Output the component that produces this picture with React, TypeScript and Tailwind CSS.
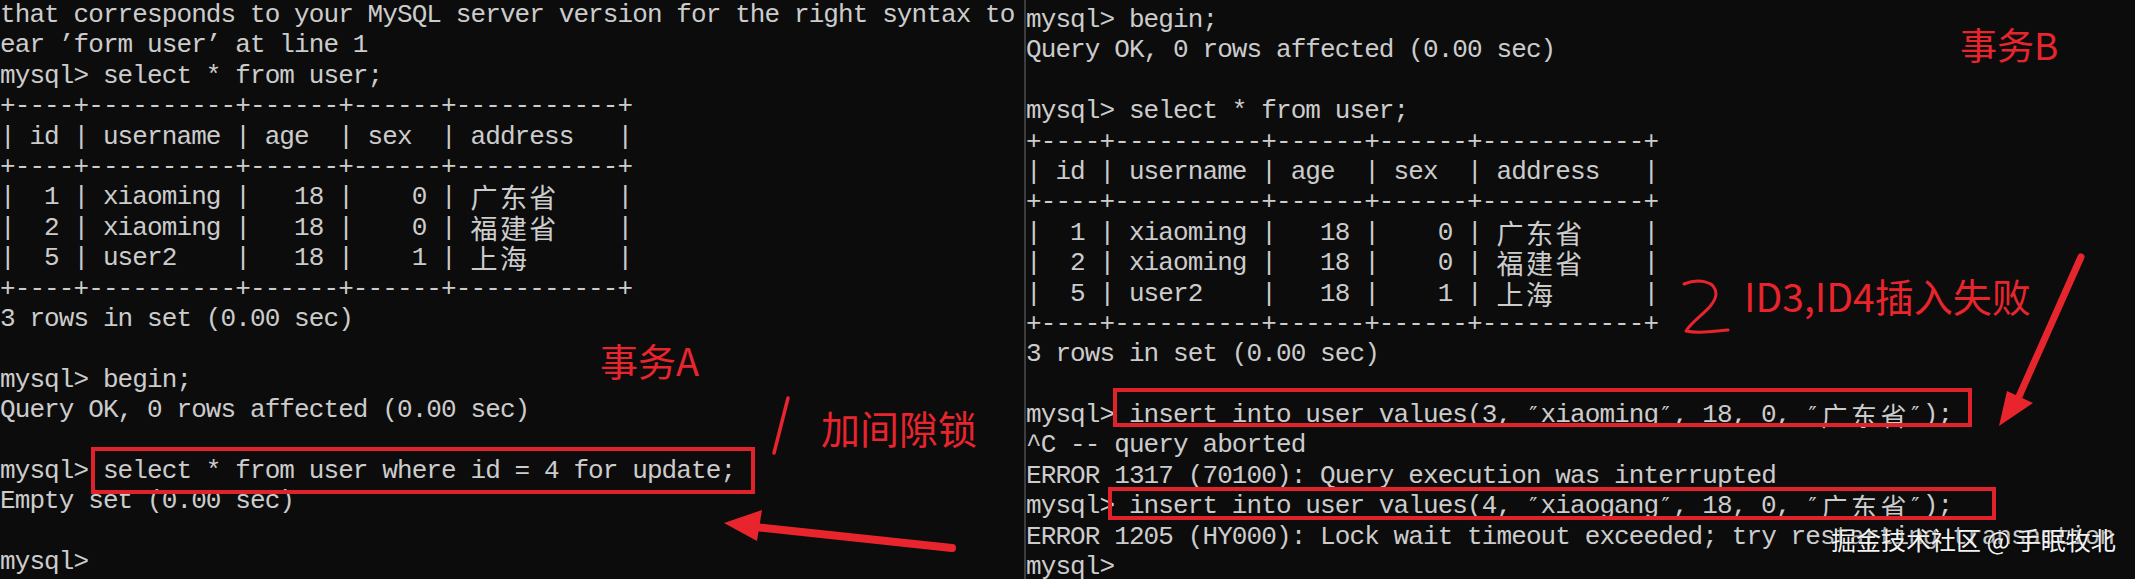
import type { ReactNode } from "react"

const leftLines = [
  "that corresponds to your MySQL server version for the right syntax to",
  "ear ’form user’ at line 1",
  "mysql> select * from user;",
  "+----+----------+------+------+-----------+",
  "| id | username | age  | sex  | address   |",
  "+----+----------+------+------+-----------+",
  "|  1 | xiaoming |   18 |    0 | {广东省}|",
  "|  2 | xiaoming |   18 |    0 | {福建省}|",
  "|  5 | user2    |   18 |    1 | {上海}|",
  "+----+----------+------+------+-----------+",
  "3 rows in set (0.00 sec)",
  "",
  "mysql> begin;",
  "Query OK, 0 rows affected (0.00 sec)",
  "",
  "mysql> select * from user where id = 4 for update;",
  "Empty set (0.00 sec)",
  "",
  "mysql>",
]

const rightLines = [
  "mysql> begin;",
  "Query OK, 0 rows affected (0.00 sec)",
  "",
  "mysql> select * from user;",
  "+----+----------+------+------+-----------+",
  "| id | username | age  | sex  | address   |",
  "+----+----------+------+------+-----------+",
  "|  1 | xiaoming |   18 |    0 | {广东省}|",
  "|  2 | xiaoming |   18 |    0 | {福建省}|",
  "|  5 | user2    |   18 |    1 | {上海}|",
  "+----+----------+------+------+-----------+",
  "3 rows in set (0.00 sec)",
  "",
  "mysql> insert into user values(3, ″xiaoming″, 18, 0, ″广东省″);",
  "^C -- query aborted",
  "ERROR 1317 (70100): Query execution was interrupted",
  "mysql> insert into user values(4, ″xiaogang″, 18, 0, ″广东省″);",
  "ERROR 1205 (HY000): Lock wait timeout exceeded; try restarting transaction",
  "mysql>",
]

// cjk glyphs take two console cells, ″ one cell, {..} is the address cell of the table
function renderLine(line: string): ReactNode[] {
  const parts = line.split(/(\{[^}]+\}|[″\u4e00-\u9fff])/).filter((s) => s !== "")
  return parts.map((s, i) => {
    if (s.startsWith("{")) {
      return (
        <span
          key={i}
          className="inline-block h-[30.4px] w-[147px] align-top font-['Noto_Sans_CJK_SC',sans-serif] text-[27px] leading-[30.4px] tracking-[2.4px]"
        >
          {s.slice(1, -1)}
        </span>
      )
    }
    if (s === "″") {
      return (
        <span
          key={i}
          className="inline-block h-[30.4px] w-[14.7px] text-center align-top font-['DejaVu_Sans',sans-serif] text-[22px] leading-[30.4px] tracking-normal"
        >
          {s}
        </span>
      )
    }
    if (/[\u4e00-\u9fff]/.test(s)) {
      return (
        <span
          key={i}
          className="inline-block h-[30.4px] w-[29.4px] text-center align-top font-['Noto_Sans_CJK_SC',sans-serif] text-[26px] leading-[30.4px] tracking-normal"
        >
          {s}
        </span>
      )
    }
    return <span key={i}>{s}</span>
  })
}

function Terminal({ lines }: { lines: string[] }) {
  return (
    <div className="whitespace-pre font-['Liberation_Mono',monospace] text-[26px] tracking-[-0.9px] text-[#cccccc]">
      {lines.map((line, i) => (
        <div key={i} className="h-[30.4px] leading-[30.4px]">
          {line === "" ? "\u00a0" : renderLine(line)}
        </div>
      ))}
    </div>
  )
}

export default function App() {
  return (
    <div className="relative flex h-[579px] w-[2135px] overflow-hidden bg-[#0c0c0c]">
      <div className="w-[1024px] shrink-0 overflow-hidden">
        <Terminal lines={leftLines} />
      </div>
      <div className="w-[2px] shrink-0 bg-[#3d3d3d]" />
      <div className="min-w-0 flex-1 overflow-hidden pt-[5px]">
        <Terminal lines={rightLines} />
      </div>

      {/* red boxes */}
      <div className="absolute left-[91px] top-[447px] h-[47px] w-[664px] border-4 border-[#e0232b]" />
      <div className="absolute left-[1113px] top-[388px] h-[39px] w-[859px] border-4 border-[#e0232b]" />
      <div className="absolute left-[1108px] top-[487px] h-[33px] w-[888px] border-4 border-[#e0232b]" />

      {/* hand-written notes */}
      <div className="absolute left-[600px] top-[341px] font-['Noto_Sans_CJK_SC',sans-serif] text-[38px] leading-none text-[#e8252c]">
        事务A
      </div>
      <div className="absolute left-[821px] top-[408px] font-['Noto_Sans_CJK_SC',sans-serif] text-[39px] leading-none text-[#e8252c]">
        加间隙锁
      </div>
      <div className="absolute left-[1960px] top-[26px] font-['Noto_Sans_CJK_SC',sans-serif] text-[37px] leading-none text-[#e8252c]">
        事务B
      </div>
      <div className="absolute left-[1744px] top-[276px] font-['Noto_Sans_CJK_SC',sans-serif] text-[39px] leading-none text-[#e8252c]">
        ID3,ID4插入失败
      </div>

      <svg className="pointer-events-none absolute inset-0" width="2135" height="579" viewBox="0 0 2135 579">
        <g fill="none" stroke="#e8252c" strokeLinecap="round" strokeLinejoin="round">
          <path d="M788 398 L774 453" strokeWidth="3.5" />
          <path d="M952 548 L755 527" strokeWidth="8" />
          <path d="M2081 257 L2017 401" strokeWidth="7" />
          <path d="M1684 284 C1698 278 1716 281 1716 294 C1715 308 1694 318 1686 331 C1700 334 1716 331 1728 330" strokeWidth="3" />
        </g>
        <g fill="#e8252c">
          <polygon points="724,523 762,510 757,541" />
          <polygon points="1999,426 2007,391 2033,403" />
        </g>
      </svg>

      <div className="absolute left-[1831px] top-[527px] whitespace-pre font-['Noto_Sans_CJK_SC',sans-serif] text-[25px] leading-none text-[#f2f2f2] [text-shadow:0_0_3px_rgba(0,0,0,0.8)]">
        掘金技术社区 @ 手眠牧北
      </div>
    </div>
  )
}
